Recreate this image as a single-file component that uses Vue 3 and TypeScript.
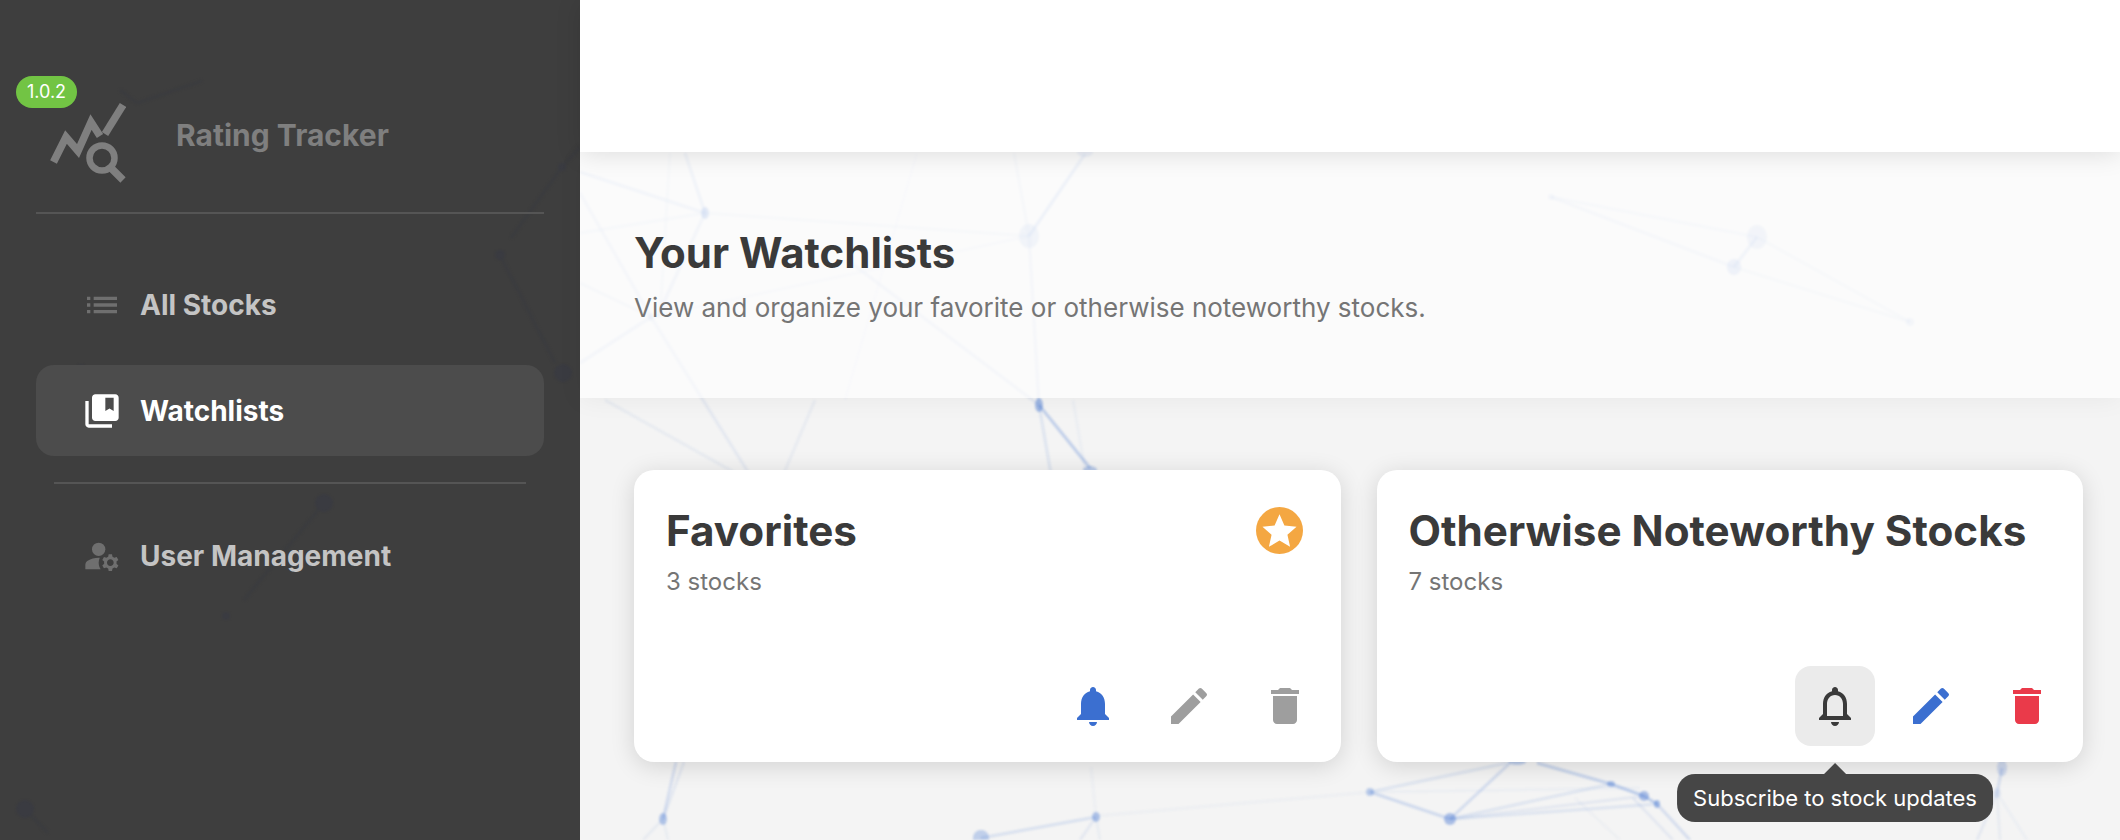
<template>
  <div class="page">
    <!-- decorative network behind the content -->
    <svg class="network" width="2120" height="840" viewBox="0 0 2120 840">
      <g class="links">
        <line v-for="(l, i) in links" :key="i" :x1="l[0]" :y1="l[1]" :x2="l[2]" :y2="l[3]" :stroke-opacity="l[4]" />
      </g>
      <g class="nodes">
        <ellipse v-for="(n, i) in nodes" :key="i" :cx="n[0]" :cy="n[1]" :rx="n[2]" :ry="n[3]" :fill-opacity="n[4]" />
      </g>
    </svg>

    <aside class="sidebar">
      <svg class="side-network" width="580" height="840" viewBox="0 0 580 840">
        <line v-for="(l, i) in sideLinks" :key="i" :x1="l[0]" :y1="l[1]" :x2="l[2]" :y2="l[3]" />
        <circle v-for="(n, i) in sideNodes" :key="i" :cx="n[0]" :cy="n[1]" :r="n[2]" />
      </svg>
      <div class="brand">
        <span class="version">1.0.2</span>
        <svg class="logo" width="76" height="80" viewBox="0 0 76 80">
          <path d="M3.5 59 L16 34 L28 48 L41 19 L50 33" fill="none" stroke="#7f7f7f" stroke-width="7.5" />
          <path d="M55 31 L73 2" fill="none" stroke="#7f7f7f" stroke-width="7.5" />
          <circle cx="52" cy="55" r="12.5" fill="none" stroke="#7f7f7f" stroke-width="6.5" />
          <path d="M61 65 L73 77" fill="none" stroke="#7f7f7f" stroke-width="7.5" />
        </svg>
        <span class="brand-name">Rating Tracker</span>
      </div>
      <hr class="rule" />
      <nav class="nav">
        <a class="nav-item">
          <svg class="nav-icon" width="40" height="40" viewBox="0 0 24 24"><path fill="#6f6f6f" d="M3 13h2v-2H3v2zm0 4h2v-2H3v2zm0-8h2V7H3v2zm4 4h14v-2H7v2zm0 4h14v-2H7v2zM7 7v2h14V7H7z" /></svg>
          All Stocks
        </a>
        <a class="nav-item active">
          <svg class="nav-icon" width="40" height="40" viewBox="0 0 24 24"><path fill="#fff" d="M4 6H2v14c0 1.1.9 2 2 2h14v-2H4V6zm16-4H8c-1.1 0-2 .9-2 2v12c0 1.1.9 2 2 2h12c1.1 0 2-.9 2-2V4c0-1.1-.9-2-2-2zm-1 10-2.5-1.5L14 12V4h5v8z" /></svg>
          Watchlists
        </a>
        <hr class="rule inner" />
        <a class="nav-item">
          <svg class="nav-icon" width="40" height="40" viewBox="0 0 24 24"><circle cx="10" cy="8" r="4" fill="#6f6f6f" /><path fill="#6f6f6f" d="M10.67 13.02C10.45 13.01 10.23 13 10 13c-2.42 0-4.68.67-6.61 1.82-.88.52-1.39 1.5-1.39 2.53V20h9.26c-.79-1.13-1.26-2.51-1.26-4 0-1.07.25-2.07.67-2.98z" /><path fill="#6f6f6f" d="M20.75 16c0-.22-.03-.42-.06-.63l1.14-1.01-1-1.73-1.45.49c-.32-.27-.68-.48-1.08-.63L18 11h-2l-.3 1.49c-.4.15-.76.36-1.08.63l-1.45-.49-1 1.73 1.14 1.01c-.03.21-.06.41-.06.63s.03.42.06.63l-1.14 1.01 1 1.73 1.45-.49c.32.27.68.48 1.08.63L16 21h2l.3-1.49c.4-.15.76-.36 1.08-.63l1.45.49 1-1.73-1.14-1.01c.03-.21.06-.41.06-.63zM17 18c-1.1 0-2-.9-2-2s.9-2 2-2 2 .9 2 2-.9 2-2 2z" /></svg>
          User Management
        </a>
      </nav>
    </aside>

    <main class="main">
      <div class="topbar"></div>
      <header class="page-head">
        <h1>Your Watchlists</h1>
        <p>View and organize your favorite or otherwise noteworthy stocks.</p>
      </header>
      <section class="cards">
        <article v-for="w in watchlists" :key="w.name" class="card">
          <div class="card-top">
            <div>
              <h2>{{ w.name }}</h2>
              <p>{{ w.count }} stocks</p>
            </div>
            <svg v-if="w.favorite" class="star" width="47" height="47" viewBox="0 0 48 48">
              <circle cx="24" cy="24" r="24" fill="#f4a742" />
              <path fill="#fff" d="M24 7.5l5 11.4 12.4 1.2-9.3 8.3 2.7 12.2L24 34.3l-10.8 6.3 2.7-12.2-9.3-8.3L19 18.9z" />
            </svg>
          </div>
          <div class="actions">
            <button class="action" :class="{ hovered: !w.favorite }">
              <svg width="48" height="48" viewBox="0 0 24 24">
                <path v-if="w.favorite" fill="#3b6fd0" d="M12 22c1.1 0 2-.9 2-2h-4c0 1.1.9 2 2 2zm6-6v-5c0-3.07-1.63-5.64-4.5-6.32V4c0-.83-.67-1.5-1.5-1.5s-1.5.67-1.5 1.5v.68C7.64 5.36 6 7.92 6 11v5l-2 2v1h16v-1l-2-2z" />
                <path v-else fill="#3a3a3a" d="M12 22c1.1 0 2-.9 2-2h-4c0 1.1.9 2 2 2zm6-6v-5c0-3.07-1.63-5.64-4.5-6.32V4c0-.83-.67-1.5-1.5-1.5s-1.5.67-1.5 1.5v.68C7.64 5.36 6 7.92 6 11v5l-2 2v1h16v-1l-2-2zm-2 1H8v-6c0-2.48 1.51-4.5 4-4.5s4 2.02 4 4.5v6z" />
              </svg>
              <span v-if="!w.favorite" class="tooltip">Subscribe to stock updates</span>
            </button>
            <button class="action">
              <svg width="48" height="48" viewBox="0 0 24 24"><path :fill="w.favorite ? '#9e9e9e' : '#3b6fd0'" d="M3 17.25V21h3.75L17.81 9.94l-3.75-3.75L3 17.25zM20.71 7.04a1 1 0 0 0 0-1.41l-2.34-2.34a1 1 0 0 0-1.41 0l-1.83 1.83 3.75 3.75 1.83-1.83z" /></svg>
            </button>
            <button class="action">
              <svg width="48" height="48" viewBox="0 0 24 24"><path :fill="w.favorite ? '#9e9e9e' : '#ea3a4a'" d="M6 19c0 1.1.9 2 2 2h8c1.1 0 2-.9 2-2V7H6v12zM19 4h-3.5l-1-1h-5l-1 1H5v2h14V4z" /></svg>
            </button>
          </div>
        </article>
      </section>
    </main>
  </div>
</template>

<script setup lang="ts">
type Watchlist = { name: string; count: number; favorite: boolean }

const watchlists: Watchlist[] = [
  { name: 'Favorites', count: 3, favorite: true },
  { name: 'Otherwise Noteworthy Stocks', count: 7, favorite: false },
]

// x1, y1, x2, y2, opacity
const links: number[][] = [
  // top left cluster
  [580, 172, 705, 213, 0.14], [685, 153, 705, 213, 0.18], [670, 153, 660, 317, 0.06], [705, 213, 657, 317, 0.14],
  [580, 233, 705, 213, 0.07], [705, 213, 1029, 236, 0.06], [651, 317, 580, 363, 0.12], [580, 193, 651, 317, 0.1],
  [651, 317, 753, 480, 0.1], [580, 283, 651, 317, 0.08], [651, 317, 1029, 236, 0.05], [917, 153, 845, 400, 0.03],
  [605, 400, 748, 480, 0.08], [815, 400, 781, 480, 0.08],
  // middle cluster
  [1029, 236, 1085, 154, 0.24], [1029, 236, 1014, 153, 0.08], [1029, 236, 1039, 405, 0.1], [850, 262, 1039, 405, 0.1],
  [1039, 405, 1090, 468, 0.34], [1039, 405, 1052, 480, 0.14], [1073, 400, 1085, 470, 0.05],
  // top right
  [1551, 197, 1757, 237, 0.07], [1551, 197, 1734, 267, 0.09], [1757, 237, 1734, 267, 0.18], [1757, 237, 1910, 322, 0.06], [1734, 267, 1910, 322, 0.06],
  // bottom left
  [663, 819, 676, 762, 0.2], [663, 819, 684, 762, 0.1], [663, 819, 643, 840, 0.08], [663, 819, 668, 840, 0.06],
  [981, 838, 1096, 817, 0.18], [1096, 817, 1080, 840, 0.1], [1096, 817, 1100, 840, 0.06], [1091, 767, 1096, 816, 0.04], [1096, 816, 1371, 792, 0.04],
  // bottom right
  [1370, 792, 1450, 819, 0.24], [1370, 792, 1507, 763, 0.14], [1450, 819, 1510, 763, 0.22], [1450, 819, 1611, 784, 0.14],
  [1450, 819, 1644, 796, 0.1], [1450, 819, 1657, 804, 0.14], [1537, 763, 1611, 784, 0.3], [1611, 784, 1644, 796, 0.36],
  [1644, 796, 1657, 804, 0.36], [1657, 804, 1690, 840, 0.2], [1633, 798, 1673, 840, 0.1], [1370, 792, 1640, 788, 0.05], [1575, 798, 1620, 840, 0.04],
  [2002, 768, 1997, 793, 0.2], [1997, 793, 1977, 840, 0.1], [1997, 793, 2000, 840, 0.08], [1997, 793, 2027, 840, 0.05],
]

// cx, cy, rx, ry, opacity
const nodes: number[][] = [
  [705, 213, 4, 6, 0.34], [1029, 236, 10, 12, 0.14], [1085, 152, 8, 5, 0.18], [651, 317, 3, 4, 0.1],
  [1039, 405, 4, 7, 0.42], [1090, 470, 7, 4, 0.3], [1551, 197, 3, 3, 0.09], [1757, 237, 10, 12, 0.12], [1734, 267, 7, 8, 0.18], [1910, 322, 4, 4, 0.1],
  [663, 819, 4, 6, 0.34], [981, 838, 8, 8, 0.28], [1096, 817, 4, 5, 0.36], [1370, 792, 4, 4, 0.3], [1450, 819, 6, 6, 0.4],
  [1517, 762, 9, 3, 0.3], [1611, 784, 4, 3, 0.36], [1644, 796, 5, 5, 0.4], [1657, 804, 3, 4, 0.42], [2002, 768, 5, 8, 0.2], [1997, 793, 4, 5, 0.1],
]

const sideLinks: number[][] = [
  [137, 103, 202, 81], [500, 255, 555, 363], [562, 167, 511, 238], [562, 167, 580, 147], [324, 503, 244, 600], [25, 809, 48, 833], [137, 103, 120, 90],
]

const sideNodes: number[][] = [
  [500, 255, 5], [563, 373, 9], [324, 503, 9], [226, 616, 4], [25, 809, 9], [562, 167, 4], [81, 367, 3],
]
</script>

<style scoped>
.page {
  position: relative;
  display: flex;
  width: 2120px;
  height: 840px;
  overflow: hidden;
  background: #f4f4f4;
  font-family: Inter, "Liberation Sans", sans-serif;
}

.network {
  position: absolute;
  top: 0;
  left: 0;
  filter: blur(1.2px);
}

.links {
  opacity: 0.8;
}

.links line {
  stroke: #3b6fd0;
  stroke-width: 3;
}

.nodes ellipse {
  fill: #3b6fd0;
}

.sidebar {
  position: relative;
  flex: 0 0 580px;
  height: 840px;
  background: #3e3e3e;
  box-sizing: border-box;
  padding: 0 36px;
}

.side-network {
  position: absolute;
  top: 0;
  left: 0;
  filter: blur(1.2px);
}

.side-network line {
  stroke: #3b3c3f;
  stroke-width: 3;
}

.side-network circle {
  fill: #3a3b41;
}

.brand {
  position: relative;
  display: flex;
  align-items: center;
  height: 212px;
  padding-left: 14px;
  padding-top: 58px;
  box-sizing: border-box;
}

.version {
  position: absolute;
  left: -20px;
  top: 76px;
  width: 61px;
  height: 32px;
  border-radius: 16px;
  background: #72c444;
  color: #fff;
  font-size: 18px;
  line-height: 32px;
  text-align: center;
}

.logo {
  display: block;
  margin-top: 16px;
}

.brand-name {
  margin-left: 50px;
  font-size: 30px;
  font-weight: 700;
  color: #7f7f7f;
}

.rule {
  position: relative;
  height: 2px;
  margin: 0;
  border: 0;
  background: #555;
}

.nav {
  position: relative;
  display: flex;
  flex-direction: column;
  padding-top: 45px;
}

.nav-item {
  display: flex;
  align-items: center;
  gap: 18px;
  height: 91px;
  padding-left: 46px;
  border-radius: 18px;
  font-size: 28px;
  font-weight: 700;
  color: #c4c4c4;
}

.nav-item + .nav-item {
  margin-top: 15px;
}

.nav-item.active {
  background: #4c4c4c;
  color: #fff;
}

.rule.inner {
  margin: 26px 18px 26px;
}

.main {
  position: relative;
  flex: 1;
  min-width: 0;
}

.topbar {
  position: relative;
  height: 152px;
  background: #fff;
  box-shadow: 0 2px 24px rgba(0, 0, 0, 0.12);
}

.page-head {
  height: 246px;
  box-sizing: border-box;
  padding: 76px 54px 0;
  background: rgba(255, 255, 255, 0.62);
  box-shadow: 0 2px 24px rgba(0, 0, 0, 0.05);
}

.page-head h1 {
  margin: 0;
  font-size: 42px;
  line-height: 50px;
  font-weight: 700;
  color: #3a3a3a;
}

.page-head p {
  margin: 14px 0 0;
  font-size: 26px;
  line-height: 32px;
  color: #757575;
}

.cards {
  display: flex;
  gap: 36px;
  padding: 72px 37px 0 54px;
}

.card {
  display: flex;
  flex-direction: column;
  justify-content: space-between;
  flex: 1;
  min-width: 0;
  height: 292px;
  box-sizing: border-box;
  padding: 36px 16px 16px 32px;
  background: #fff;
  border-radius: 20px;
  box-shadow: 0 4px 24px rgba(0, 0, 0, 0.14);
}

.card-top {
  display: flex;
  justify-content: space-between;
  align-items: flex-start;
  padding-right: 22px;
}

.star {
  margin-top: 1px;
}

.card h2 {
  margin: 0;
  font-size: 42.2px;
  line-height: 50px;
  font-weight: 700;
  color: #3a3a3a;
}

.card p {
  margin: 10px 0 0;
  font-size: 24px;
  line-height: 32px;
  color: #757575;
}

.actions {
  display: flex;
  justify-content: flex-end;
  gap: 16px;
}

.action {
  position: relative;
  display: flex;
  align-items: center;
  justify-content: center;
  width: 80px;
  height: 80px;
  padding: 0;
  border: 0;
  border-radius: 16px;
  background: transparent;
  font: inherit;
}

.action.hovered {
  background: #ebebeb;
}

.tooltip {
  position: absolute;
  top: 108px;
  left: 50%;
  transform: translateX(-50%);
  padding: 0 16px;
  height: 48px;
  line-height: 48px;
  border-radius: 18px;
  background: #464646;
  color: #fff;
  font-size: 22px;
  white-space: nowrap;
}

.tooltip::before {
  content: "";
  position: absolute;
  top: -11px;
  left: 50%;
  margin-left: -11px;
  border-left: 11px solid transparent;
  border-right: 11px solid transparent;
  border-bottom: 11px solid #464646;
}
</style>
